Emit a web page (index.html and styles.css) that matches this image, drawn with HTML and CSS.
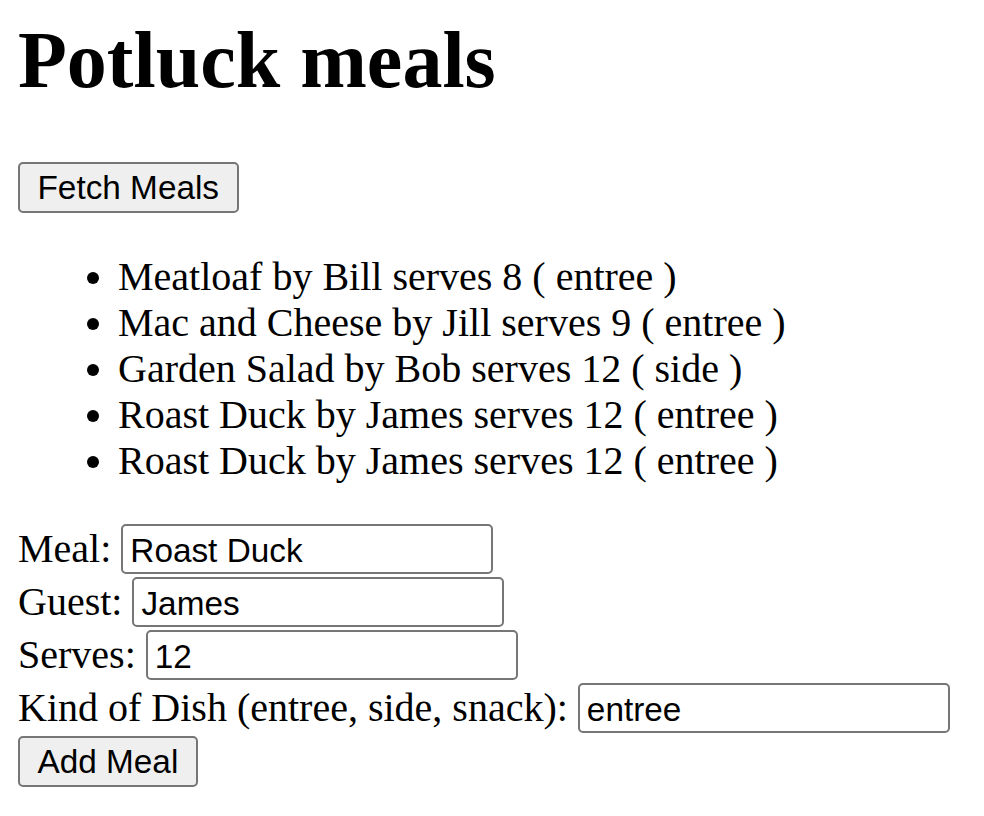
FILE: index.html
```html
<!DOCTYPE html>
<html>
<head>
<meta charset="utf-8">
<title>Potluck meals</title>
<link rel="stylesheet" href="styles.css">
</head>
<body>
<h1 class="title">Potluck meals</h1>
<div class="actions">
  <button class="btn" type="button">Fetch Meals</button>
</div>
<ul class="meals">
  <li>Meatloaf by Bill serves 8 ( entree )</li>
  <li>Mac and Cheese by Jill serves 9 ( entree )</li>
  <li>Garden Salad by Bob serves 12 ( side )</li>
  <li>Roast Duck by James serves 12 ( entree )</li>
  <li>Roast Duck by James serves 12 ( entree )</li>
</ul>
<form class="meal-form">
  <div class="row"><label for="meal">Meal:</label><input class="field" id="meal" type="text" value="Roast Duck"></div>
  <div class="row"><label for="guest">Guest:</label><input class="field" id="guest" type="text" value="James"></div>
  <div class="row"><label for="serves">Serves:</label><input class="field" id="serves" type="text" value="12"></div>
  <div class="row"><label for="kind">Kind of Dish (entree, side, snack):</label><input class="field" id="kind" type="text" value="entree"></div>
  <div class="row"><button class="btn" type="button">Add Meal</button></div>
</form>
</body>
</html>
```
FILE: styles.css
```css
html, body {
  background: #ffffff;
}
body {
  margin: 0;
  padding: 14px 18px 0;
  font-family: "Liberation Serif", "Times New Roman", serif;
  font-size: 40px;
  line-height: 46px;
  color: #000000;
}
.title {
  font-size: 80px;
  line-height: 92px;
  font-weight: bold;
  margin: 0 0 56px;
}
.actions {
  height: 51px;
}
.btn {
  box-sizing: border-box;
  height: 51px;
  margin: 0;
  padding: 0 17.5px;
  font-family: "Liberation Sans", Arial, sans-serif;
  font-size: 33.33px;
  line-height: 38px;
  color: #000000;
  background: #efefef;
  border: 2.5px solid #767676;
  border-radius: 5px;
}
.meals {
  margin: 41px 0 40px;
  padding-left: 100px;
}
.meal-form {
  margin: 0;
  padding-top: 0;
}
.row {
  display: flex;
  align-items: baseline;
  gap: 10px;
  height: 53px;
}
.field {
  box-sizing: border-box;
  width: 372px;
  height: 50px;
  margin: 0;
  padding: 3px 7px 0;
  font-family: "Liberation Sans", Arial, sans-serif;
  font-size: 33.33px;
  color: #000000;
  background: #ffffff;
  border: 2.5px solid #767676;
  border-radius: 5px;
}
```
